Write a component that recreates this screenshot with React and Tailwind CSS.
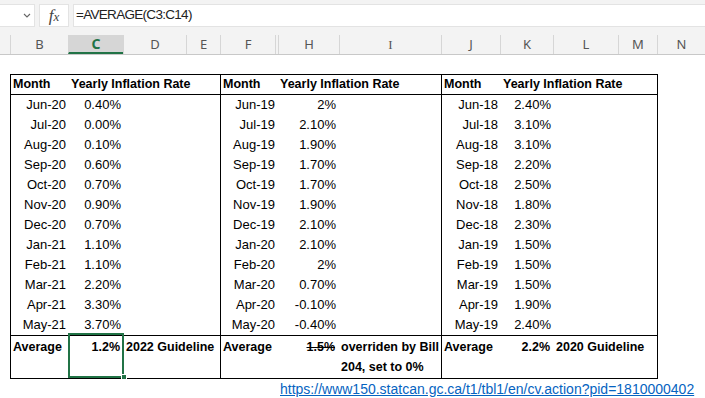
import React from "react";

const headers = [
  { l: "B", c: "w-[58px]" },
  { l: "C", c: "w-[55px]", sel: true },
  { l: "D", c: "w-[63px]" },
  { l: "E", c: "w-[34px]" },
  { l: "F", c: "w-[56px] border-r" },
  { l: "", c: "w-[2px] !border-l-0" },
  { l: "H", c: "w-[61px]" },
  { l: "I", c: "w-[102px]", serif: true },
  { l: "J", c: "w-[59px]" },
  { l: "K", c: "w-[53px]" },
  { l: "L", c: "w-[65px]" },
  { l: "M", c: "w-[39px]" },
  { l: "N", c: "w-[48px]" },
];

const t1 = [
  ["Jun-20", "0.40%"], ["Jul-20", "0.00%"], ["Aug-20", "0.10%"], ["Sep-20", "0.60%"],
  ["Oct-20", "0.70%"], ["Nov-20", "0.90%"], ["Dec-20", "0.70%"], ["Jan-21", "1.10%"],
  ["Feb-21", "1.10%"], ["Mar-21", "2.20%"], ["Apr-21", "3.30%"], ["May-21", "3.70%"],
];
const t2 = [
  ["Jun-19", "2%"], ["Jul-19", "2.10%"], ["Aug-19", "1.90%"], ["Sep-19", "1.70%"],
  ["Oct-19", "1.70%"], ["Nov-19", "1.90%"], ["Dec-19", "2.10%"], ["Jan-20", "2.10%"],
  ["Feb-20", "2%"], ["Mar-20", "0.70%"], ["Apr-20", "-0.10%"], ["May-20", "-0.40%"],
];
const t3 = [
  ["Jun-18", "2.40%"], ["Jul-18", "3.10%"], ["Aug-18", "3.10%"], ["Sep-18", "2.20%"],
  ["Oct-18", "2.50%"], ["Nov-18", "1.80%"], ["Dec-18", "2.30%"], ["Jan-19", "1.50%"],
  ["Feb-19", "1.50%"], ["Mar-19", "1.50%"], ["Apr-19", "1.90%"], ["May-19", "2.40%"],
];

function Block({ data, mw, rw, restW, border, avgRate, strike, note }) {
  return (
    <div className={`flex flex-col ${border ? "border-l border-black" : ""}`}>
      <div className="flex h-[20px] border-b border-black items-center leading-[19px] font-bold text-[12.5px]">
        <div className={`${mw} pl-[2px] whitespace-nowrap`}>Month</div>
        <div className={`${rw} pl-[3px] whitespace-nowrap`}>Yearly Inflation Rate</div>
        <div className={restW}></div>
      </div>
      {data.map(([m, r]) => (
        <div key={m} className="flex h-[20px] items-center leading-[20px] text-[13px]">
          <div className={`${mw} text-right pr-[2px]`}>{m}</div>
          <div className={`${rw} text-right pr-[2px]`}>{r}</div>
          <div className={restW}></div>
        </div>
      ))}
      <div className="flex h-[43px] border-t border-black pt-[1px] leading-[20px] font-bold text-[12.5px]">
        <div className={`${mw} pl-[2px]`}>Average</div>
        <div className={`${rw} text-right pr-[3px]`}>
          <span className={strike ? "line-through" : ""}>{avgRate}</span>
        </div>
        <div className={`${restW} pl-[3px] whitespace-nowrap`}>{note}</div>
      </div>
    </div>
  );
}

export default function App() {
  return (
    <div className="w-[705px] h-[398px] overflow-hidden bg-white relative font-['Liberation_Sans',Arial,sans-serif] text-black">
      {/* formula bar */}
      <div className="h-[35px] bg-[#f3f3f3] pt-[4px]">
        <div className="flex h-[23px] gap-[4px]">
          <div className="w-[35px] bg-white border border-l-0 border-[#e3e3e3] flex items-center justify-end pr-[3px]">
            <svg width="8" height="5" viewBox="0 0 8 5">
              <polyline points="1,1 4,4 7,1" fill="none" stroke="#666" strokeWidth="1.1" />
            </svg>
          </div>
          <div className="w-[30px] bg-white border border-[#e3e3e3] flex items-center justify-center">
            <span className="font-['Liberation_Serif',serif] italic text-[17px] text-[#444] leading-none">
              f<span className="text-[13px]">x</span>
            </span>
          </div>
          <div className="flex-1 bg-white border border-r-0 border-[#e3e3e3] flex items-center pl-[2px] text-[13.5px] tracking-[-0.7px] text-[#222]">
            =AVERAGE(C3:C14)
          </div>
        </div>
      </div>
      {/* column headers */}
      <div className="flex h-[20px] bg-[#f3f3f3] border-b border-[#c8c8c8] font-['Noto_Sans',sans-serif] text-[13px] text-[#555]">
        <div className="w-[10px]"></div>
        {headers.map((h, i) => (
          <div
            key={i}
            className={`${h.c} border-l border-[#d6d6d6] flex items-center justify-center leading-none ${
              h.sel ? "bg-[#d6d6d6] text-[#217346] font-bold text-[14px] border-b-2 border-b-[#217346]" : ""
            } ${h.serif ? "font-['Liberation_Serif',serif]" : ""}`}
          >
            {h.l}
          </div>
        ))}
      </div>
      <div className="h-[19px]"></div>
      {/* table */}
      <div className="ml-[10px] w-[648px] border border-black flex">
        <Block data={t1} mw="w-[57px]" rw="w-[55px]" restW="w-[97px]" avgRate="1.2%" note="2022 Guideline" />
        <Block
          data={t2}
          border
          mw="w-[56px]"
          rw="w-[61px]"
          restW="w-[103px]"
          avgRate="1.5%"
          strike
          note={
            <>
              overriden by Bill
              <br />
              204, set to 0%
            </>
          }
        />
        <Block data={t3} border mw="w-[58px]" rw="w-[53px]" restW="w-[104px]" avgRate="2.2%" note="2020 Guideline" />
      </div>
      {/* link row */}
      <div className="h-[19px] flex items-center pl-[280px]">
        <span className="text-[14px] text-[#0563c1] underline leading-none whitespace-nowrap">
          https://www150.statcan.gc.ca/t1/tbl1/en/cv.action?pid=1810000402
        </span>
      </div>
      {/* selection */}
      <div className="absolute left-[68px] top-[333px] w-[56px] h-[45px] border-2 border-[#217346]"></div>
      <div className="absolute left-[121px] top-[374px] w-[6px] h-[6px] bg-[#217346] border border-white"></div>
    </div>
  );
}
